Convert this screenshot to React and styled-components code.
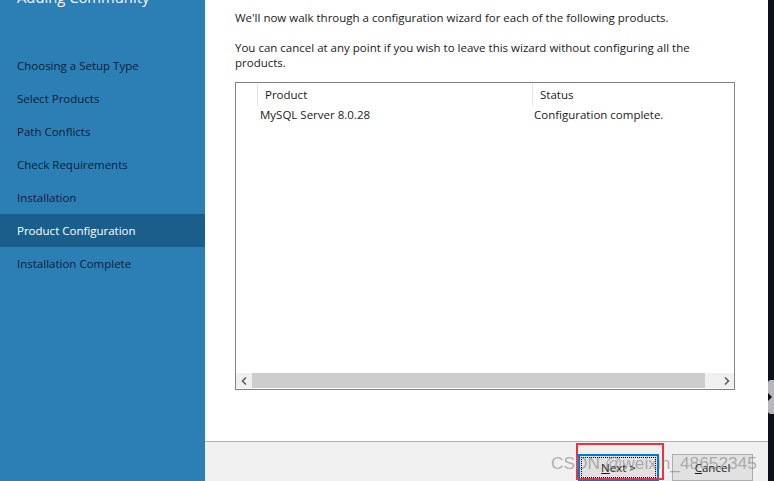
import React from "react";
import styled, { createGlobalStyle } from "styled-components";

const Global = createGlobalStyle`
  html, body {
    margin: 0;
    padding: 0;
    background: #ffffff;
  }
  body {
    font-family: "Segoe UI", "Open Sans", sans-serif;
    font-size: 11.5px;
    color: #1a1a1a;
  }
`;

const Window = styled.div`
  position: relative;
  display: flex;
  width: 774px;
  height: 481px;
  overflow: hidden;
`;

const Sidebar = styled.div`
  width: 205px;
  flex-shrink: 0;
  background: #2b7fb5;
  display: flex;
  flex-direction: column;
`;

const Title = styled.div`
  margin: -15px 0 40px 17px;
  height: 24px;
  font-size: 14.8px;
  line-height: 24px;
  color: #f4f8fb;
  white-space: nowrap;
`;

const Step = styled.div`
  height: 33px;
  display: flex;
  align-items: center;
  padding-left: 17px;
  font-size: 11.5px;
  color: ${p => (p.active ? "#ffffff" : "#0d2035")};
  background: ${p => (p.active ? "#1a5f8b" : "transparent")};
`;

const Main = styled.div`
  flex: 1;
  display: flex;
  flex-direction: column;
  background: #ffffff;
`;

const Content = styled.div`
  flex: 1;
  padding: 10px 0 0 30px;
  display: flex;
  flex-direction: column;
`;

const Para = styled.p`
  margin: 0 0 15px;
  width: 500px;
  line-height: 15px;
  font-size: 11.5px;
  color: #1a1a1a;
`;

const ListBox = styled.div`
  margin-top: -3px;
  width: 498px;
  height: 306px;
  border: 1px solid #828282;
  display: flex;
  flex-direction: column;
`;

const Row = styled.div`
  display: grid;
  grid-template-columns: 21px 275px 1fr;
  height: ${p => (p.header ? "23px" : "17px")};
  align-items: center;
`;

const HeadCell = styled.div`
  height: 100%;
  display: flex;
  align-items: center;
  padding-left: 7px;
  border-left: ${p => (p.first ? "none" : "1px solid #e5e5e5")};
  color: #1a1a1a;
`;

const Cell = styled.div`
  padding-left: ${p => p.pad}px;
  color: #1a1a1a;
  white-space: nowrap;
`;

const Spacer = styled.div`
  flex: 1;
`;

const HScroll = styled.div`
  height: 15px;
  margin-bottom: 1px;
  display: flex;
  background: #f0f0f0;
`;

const Arrow = styled.div`
  width: 16px;
  display: flex;
  align-items: center;
  justify-content: center;
`;

const Thumb = styled.div`
  width: 453px;
  background: #cdcdcd;
`;

const Footer = styled.div`
  box-sizing: border-box;
  height: 40px;
  flex-shrink: 0;
  border-top: 1px solid #b0b0b0;
  background: #f0f0f0;
  display: flex;
  justify-content: flex-end;
  align-items: flex-start;
  gap: 13px;
  padding: 12px 15px 0 0;
`;

const Button = styled.div`
  width: 77px;
  height: 23px;
  box-sizing: content-box;
  border: ${p => (p.primary ? "2px solid #0078d7" : "1px solid #adadad")};
  padding: ${p => (p.primary ? "0" : "1px")};
  background: #e1e1e1;
  display: flex;
  align-items: center;
  justify-content: center;
  color: #1a1a1a;
`;

const Focus = styled.span`
  display: flex;
  align-items: center;
  justify-content: center;
  width: calc(100% - 4px);
  height: calc(100% - 4px);
  border: 1px dotted #000000;
`;

const Edge = styled.div`
  width: 6px;
  flex-shrink: 0;
  background: #0a0f1a;
  display: flex;
  flex-direction: column;
  padding-top: 380px;
`;

const EdgeKnob = styled.div`
  height: 34px;
  background: #b8b8b8;
  border-radius: 3px 0 0 3px;
  position: relative;
  &::after {
    content: "";
    position: absolute;
    left: 0;
    top: 13px;
    border-top: 4px solid transparent;
    border-bottom: 4px solid transparent;
    border-left: 4px solid #0a0f1a;
  }
`;

const Annotation = styled.div`
  position: absolute;
  left: 576px;
  top: 443px;
  width: 84px;
  height: 33px;
  border: 2px solid #e8333a;
  pointer-events: none;
`;

const Watermark = styled.div`
  position: absolute;
  left: 551px;
  top: 453px;
  font-family: "Liberation Sans", Arial, sans-serif;
  font-size: 17.3px;
  color: rgba(120, 120, 120, 0.55);
  white-space: nowrap;
  pointer-events: none;
`;

const U = styled.span`
  text-decoration: underline;
`;

const Chevron = ({ dir }) => (
  <svg width="7" height="8" viewBox="0 0 7 8">
    <path
      d={dir === "left" ? "M5 0.5 L1.5 4 L5 7.5" : "M2 0.5 L5.5 4 L2 7.5"}
      fill="none"
      stroke="#606060"
      strokeWidth="1.6"
    />
  </svg>
);

const steps = [
  "Choosing a Setup Type",
  "Select Products",
  "Path Conflicts",
  "Check Requirements",
  "Installation",
  "Product Configuration",
  "Installation Complete",
];

export default function App() {
  return (
    <>
      <Global />
      <Window>
        <Sidebar>
          <Title>Adding Community</Title>
          {steps.map(s => (
            <Step key={s} active={s === "Product Configuration"}>
              {s}
            </Step>
          ))}
        </Sidebar>
        <Main>
          <Content>
            <Para>We'll now walk through a configuration wizard for each of the following products.</Para>
            <Para>
              You can cancel at any point if you wish to leave this wizard without configuring all the products.
            </Para>
            <ListBox>
              <Row header>
                <HeadCell first />
                <HeadCell>Product</HeadCell>
                <HeadCell>Status</HeadCell>
              </Row>
              <Row>
                <span />
                <Cell pad={3}>MySQL Server 8.0.28</Cell>
                <Cell pad={2}>Configuration complete.</Cell>
              </Row>
              <Spacer />
              <HScroll>
                <Arrow>
                  <Chevron dir="left" />
                </Arrow>
                <Thumb />
                <Spacer />
                <Arrow>
                  <Chevron dir="right" />
                </Arrow>
              </HScroll>
            </ListBox>
          </Content>
          <Footer>
            <Button primary>
              <Focus>
                <U>N</U>ext &gt;
              </Focus>
            </Button>
            <Button>
              <U>C</U>ancel
            </Button>
          </Footer>
        </Main>
        <Edge>
          <EdgeKnob />
        </Edge>
        <Annotation />
        <Watermark>CSDN @weixin_48652345</Watermark>
      </Window>
    </>
  );
}
